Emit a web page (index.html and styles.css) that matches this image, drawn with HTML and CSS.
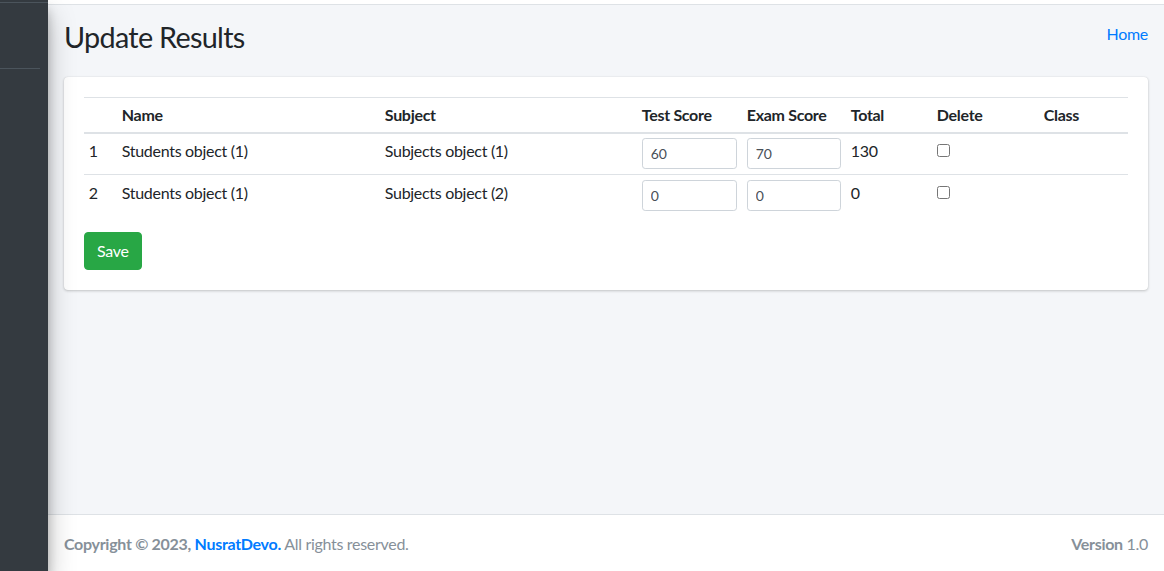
FILE: index.html
```html
<!DOCTYPE html>
<html lang="en">
<head>
<meta charset="utf-8">
<title>Update Results</title>
<link rel="stylesheet" href="styles.css">
</head>
<body>
<div class="wrapper">
  <aside class="sidebar">
    <div class="sidebar-top"></div>
    <div class="sidebar-brand"></div>
  </aside>
  <div class="main">
    <div class="navbar"></div>
    <div class="content">
      <div class="content-header">
        <h1 class="title">Update Results</h1>
        <a class="crumb" href="#">Home</a>
      </div>
      <div class="card">
        <table class="table">
          <colgroup>
            <col class="c-num"><col class="c-name"><col class="c-subj"><col class="c-test"><col class="c-exam"><col class="c-total"><col class="c-del"><col class="c-class">
          </colgroup>
          <thead>
            <tr><th></th><th>Name</th><th>Subject</th><th>Test Score</th><th>Exam Score</th><th>Total</th><th>Delete</th><th>Class</th></tr>
          </thead>
          <tbody>
            <tr>
              <td>1</td><td>Students object (1)</td><td>Subjects object (1)</td>
              <td><input class="field" type="text" value="60"></td>
              <td><input class="field" type="text" value="70"></td>
              <td>130</td>
              <td><input class="check" type="checkbox"></td>
              <td></td>
            </tr>
            <tr>
              <td>2</td><td>Students object (1)</td><td>Subjects object (2)</td>
              <td><input class="field" type="text" value="0"></td>
              <td><input class="field" type="text" value="0"></td>
              <td>0</td>
              <td><input class="check" type="checkbox"></td>
              <td></td>
            </tr>
          </tbody>
        </table>
        <button class="btn-save" type="button">Save</button>
      </div>
    </div>
    <footer class="footer">
      <div class="copy"><strong>Copyright © 2023, <a class="brand" href="#">NusratDevo.</a></strong> All rights reserved.</div>
      <div class="version"><strong>Version</strong> 1.0</div>
    </footer>
  </div>
</div>
</body>
</html>
```
FILE: styles.css
```css
* { box-sizing: border-box; }
html, body { margin: 0; height: 100%; }
body {
  font-family: "Lato", "Liberation Sans", sans-serif;
  font-size: 16px;
  line-height: 1.5;
  letter-spacing: -0.3px;
  color: #212529;
  background: #f4f6f9;
  overflow: hidden;
}
.wrapper { display: flex; height: 100vh; }
.sidebar {
  width: 48px;
  flex: none;
  background: #343a40;
  position: relative;
  z-index: 2;
  box-shadow: 0 14px 28px rgba(0,0,0,.25), 0 10px 10px rgba(0,0,0,.22);
}
.sidebar-top { height: 3px; border-bottom: 1px solid #4b545c; }
.sidebar-brand { height: 66px; border-bottom: 1px solid #4b545c; margin-right: 8px; }
.main { flex: 1; display: flex; flex-direction: column; min-width: 0; }
.navbar { height: 5px; background: #fff; border-bottom: 1px solid #dee2e6; flex: none; }
.content { flex: 1; padding: 0 16px; }
.content-header {
  display: flex;
  justify-content: space-between;
  align-items: flex-start;
  padding: 15px 0 22px;
}
.title { margin: 0; font-size: 28.8px; font-weight: 400; line-height: 35px; letter-spacing: -0.7px; color: #212529; }
.crumb { color: #007bff; text-decoration: none; font-size: 16px; line-height: 24px; margin-top: 2px; }
.card {
  background: #fff;
  border-radius: 4px;
  box-shadow: 0 0 1px rgba(0,0,0,.125), 0 1px 3px rgba(0,0,0,.2);
  padding: 20px;
}
.table { width: 100%; border-collapse: collapse; table-layout: fixed; }
.c-num { width: 33px; }
.c-name { width: 263px; }
.c-subj { width: 257px; }
.c-test { width: 105px; }
.c-exam { width: 104px; }
.c-total { width: 86px; }
.c-del { width: 107px; }
.c-class { width: 89px; }
.table th, .table td {
  padding: 4.8px;
  text-align: left;
  vertical-align: top;
  border-top: 1px solid #dee2e6;
  line-height: 24px;
}
.table td { padding-top: 5.8px; padding-bottom: 4.8px; }
.table th { font-weight: 700; border-bottom: 2px solid #dee2e6; }
.table td .field { margin-top: -1px; }
.field {
  display: block;
  width: 100%;
  height: 31px;
  padding: 4px 8px;
  font-family: inherit;
  font-size: 14px;
  letter-spacing: -0.2px;
  color: #495057;
  background: #fff;
  border: 1px solid #ced4da;
  border-radius: 3.2px;
}
.check { margin: 5px 0 0; width: 13px; height: 13px; }
.btn-save {
  margin-top: 16px;
  height: 38px;
  padding: 6px 12px;
  font-family: inherit;
  font-size: 16px;
  line-height: 24px;
  letter-spacing: -0.3px;
  color: #fff;
  background: #28a745;
  border: 1px solid #28a745;
  border-radius: 4px;
}
.footer {
  flex: none;
  background: #fff;
  border-top: 1px solid #dee2e6;
  padding: 17px 16px 15px;
  color: #869099;
  display: flex;
  justify-content: space-between;
  line-height: 24px;
}
.brand { color: #007bff; text-decoration: none; }
```
